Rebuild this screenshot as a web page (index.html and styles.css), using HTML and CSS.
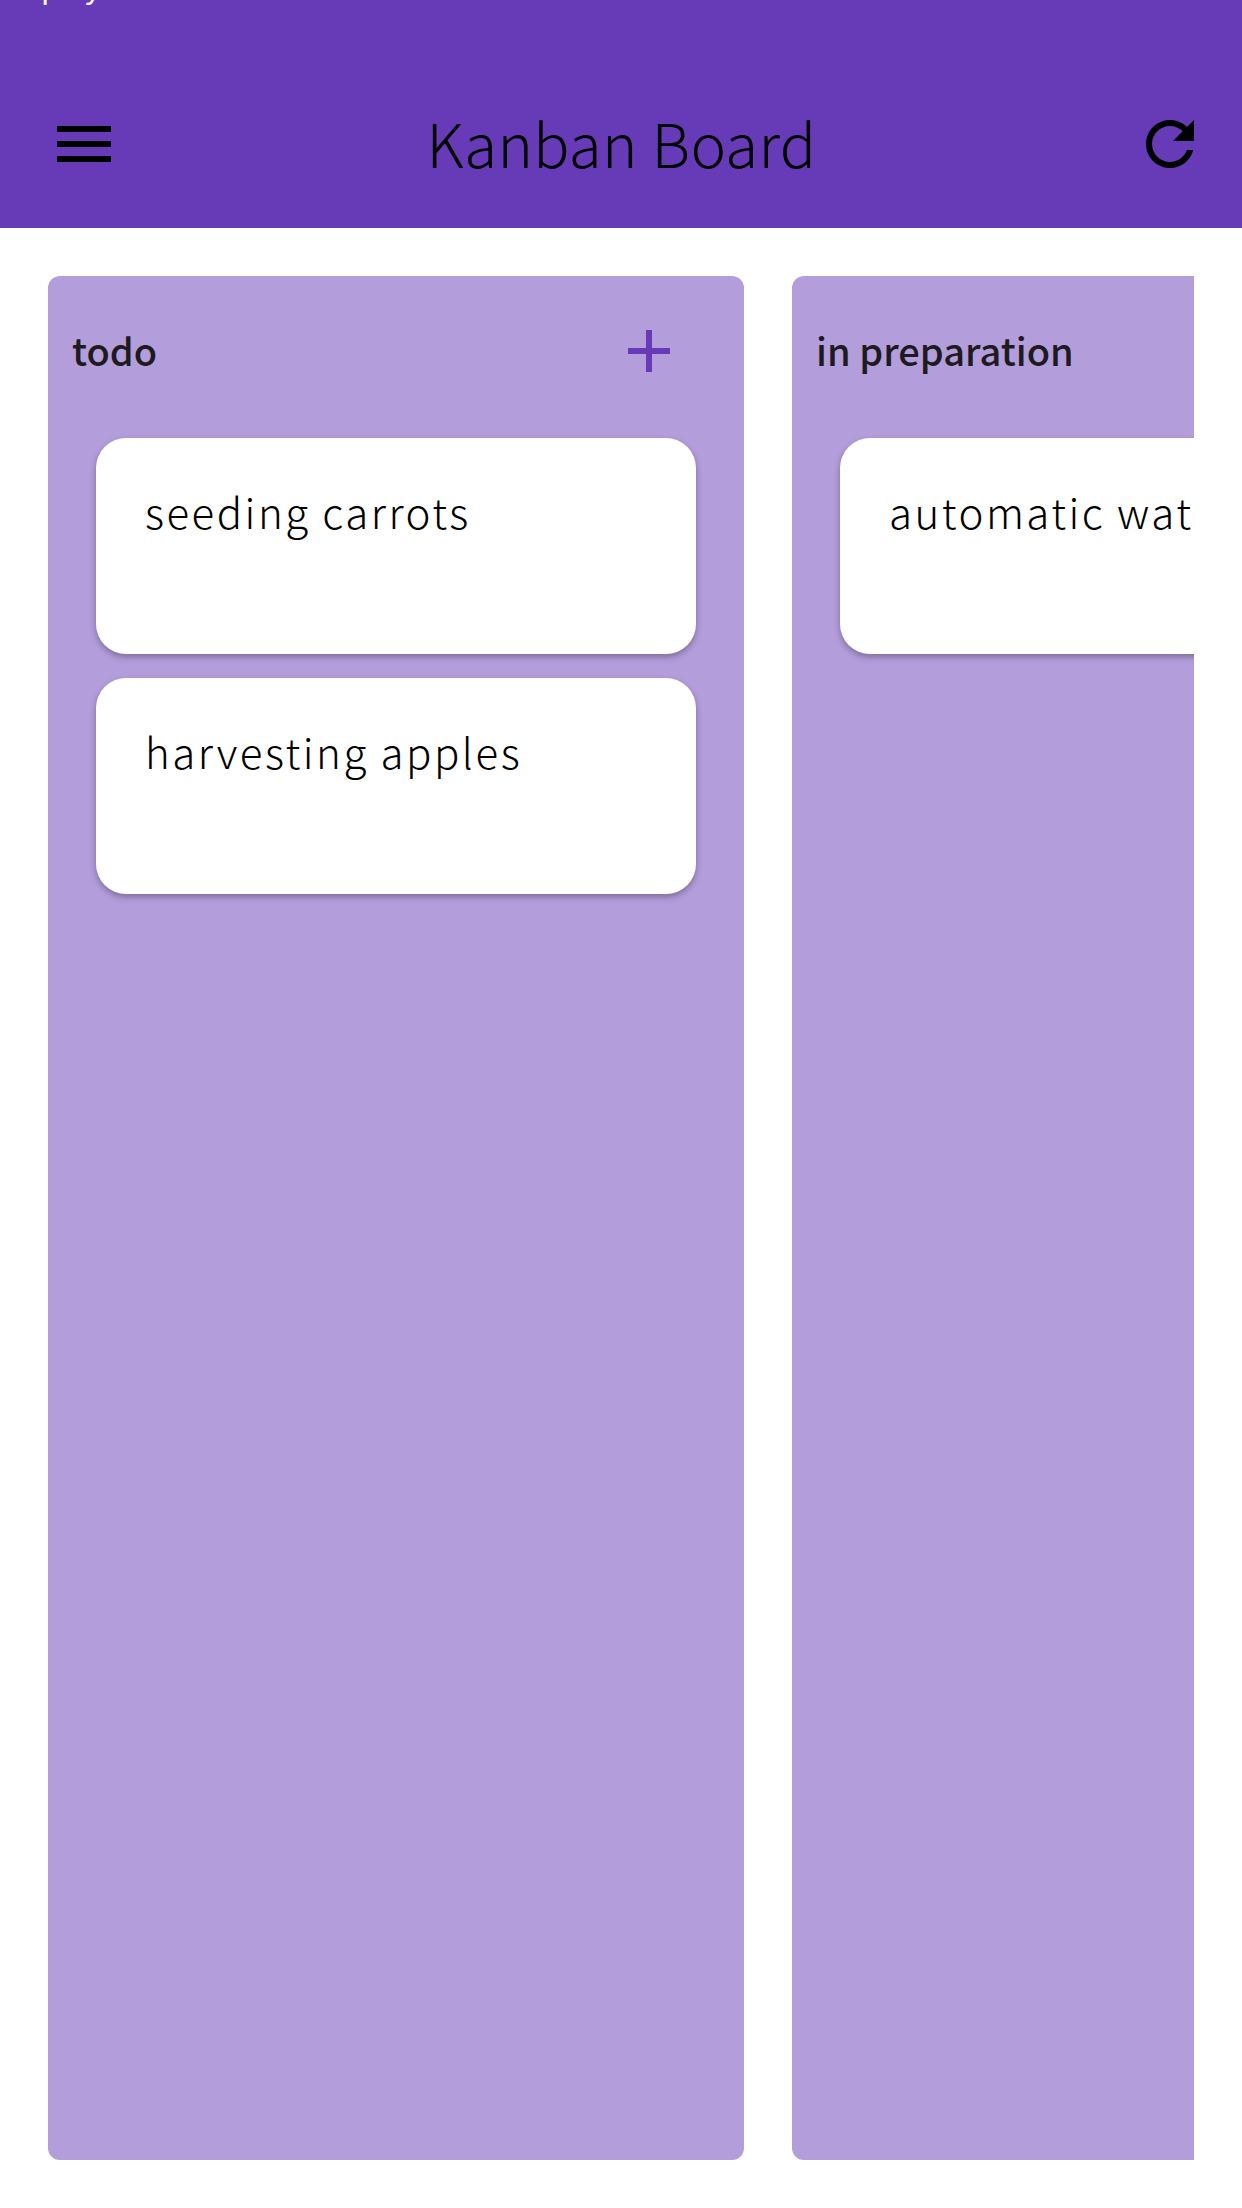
FILE: index.html
```html
<!DOCTYPE html>
<html lang="en">

<head>
  <meta charset="UTF-8" />
  <title>Kanban Board</title>
  <link rel="stylesheet" href="styles.css">
</head>

<body>
  <div class="status">display mode status bar</div>
  <div class="bar">
    <svg class="icon" viewBox="0 0 24 24"><path d="M3 18h18v-2H3v2zm0-5h18v-2H3v2zm0-7v2h18V6H3z" /></svg>
    <div class="title">Kanban Board</div>
    <svg class="icon" viewBox="0 0 24 24"><path d="M17.65 6.35C16.2 4.9 14.21 4 12 4c-4.42 0-7.99 3.58-7.99 8s3.57 8 7.99 8c3.73 0 6.84-2.55 7.73-6h-2.08c-.82 2.33-3.04 4-5.65 4-3.31 0-6-2.69-6-6s2.69-6 6-6c1.66 0 3.14.69 4.22 1.78L13 11h7V4l-2.35 2.35z" /></svg>
  </div>
  <div class="board">
    <div class="col">
      <div class="col-head">
        <span class="col-name">todo</span>
        <svg class="icon add" viewBox="0 0 24 24"><path d="M19 13h-6v6h-2v-6H5v-2h6V5h2v6h6v2z" /></svg>
      </div>
      <div class="card">seeding carrots</div>
      <div class="card">harvesting apples</div>
    </div>
    <div class="col">
      <div class="col-head">
        <span class="col-name">in preparation</span>
      </div>
      <div class="card">automatic watering</div>
    </div>
  </div>
</body>

</html>
```

FILE: styles.css
```css
* {
  padding: 0;
  margin: 0;
  box-sizing: border-box;
}

body {
  width: 1242px;
  height: 2208px;
  overflow: hidden;
  background: #fff;
  font-family: "Noto Sans CJK JP", "Noto Sans", sans-serif;
}

/* only the bottom of this line shows at the top edge */
.status {
  position: absolute;
  left: 0;
  top: -20px;
  font-size: 30px;
  line-height: 10px;
  color: #fff;
}

.icon {
  display: block;
  width: 72px;
  height: 72px;
  flex: none;
}

.bar {
  height: 228px;
  background: #673ab7;
  display: flex;
  align-items: center;
  justify-content: space-between;
  padding: 60px 36px 0 48px;
}

.title {
  font-size: 60px;
  font-weight: 300;
  letter-spacing: 0.35px;
  color: #000;
  margin: 0 11px 6px 0;
}

.board {
  display: flex;
  gap: 48px;
  width: 1146px;
  margin: 48px 0 0 48px;
  overflow: hidden;
}

.col {
  flex: 0 0 696px;
  height: 1884px;
  background: #b39ddb;
  border-radius: 12px;
}

.col-head {
  height: 162px;
  display: flex;
  align-items: center;
  justify-content: space-between;
  padding: 0 59px 12px 24px;
}

.col-name {
  font-size: 38px;
  font-weight: 500;
  color: #1d1b20;
  margin-bottom: 3px;
}

.add {
  fill: #673ab7;
}

.card {
  width: 600px;
  height: 216px;
  margin: 0 48px 24px;
  padding: 42px 49px;
  background: #fff;
  border-radius: 30px;
  box-shadow: 0 3px 6px rgba(0, 0, 0, 0.3);
  font-size: 42px;
  font-weight: 300;
  letter-spacing: 2.5px;
  white-space: nowrap;
  overflow: hidden;
  color: #000;
}
```
